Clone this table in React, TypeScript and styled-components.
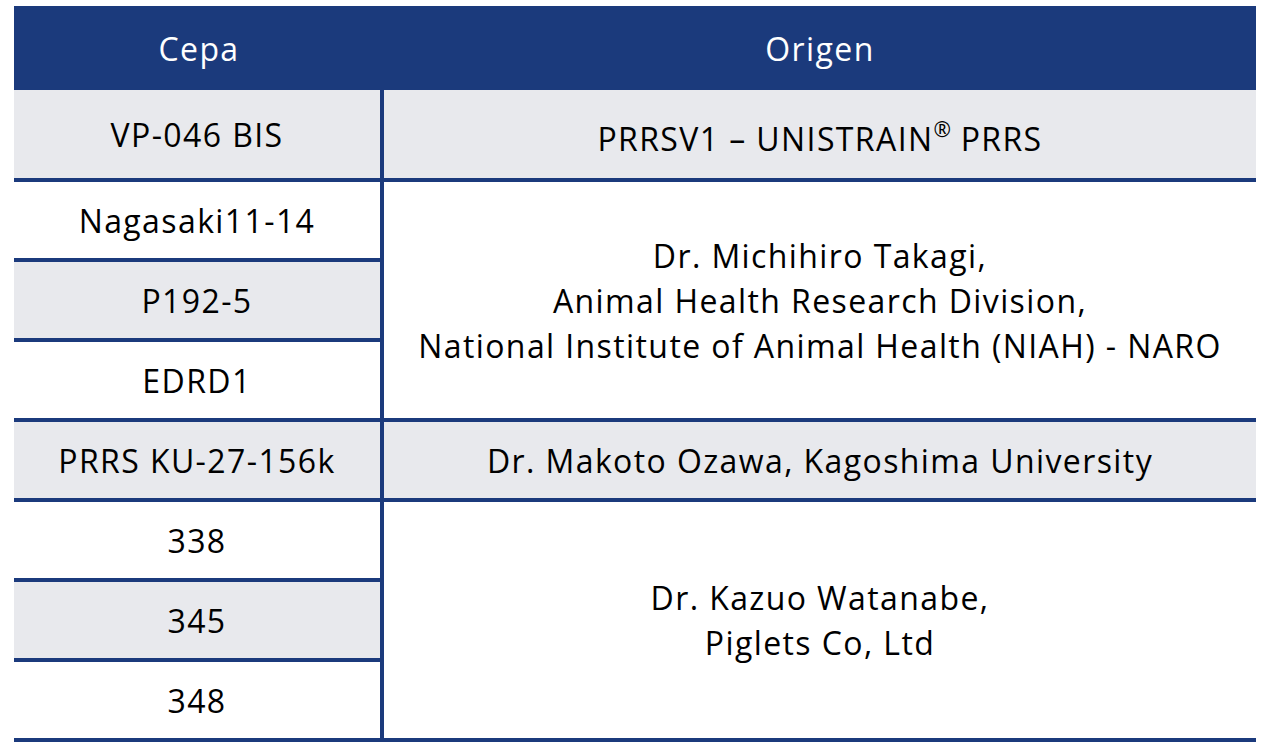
import type { ReactNode } from 'react';
import styled, { createGlobalStyle } from 'styled-components';

const NAVY = '#1b3a7c';
const GREY = '#e8e9ed';

const GlobalStyle = createGlobalStyle`
  body {
    margin: 0;
    background: #ffffff;
    font-family: "Open Sans", Inter, "Liberation Sans", sans-serif;
  }
`;

const Page = styled.div`
  padding: 6px 16px 0 14px;
`;

const Table = styled.table`
  width: 1242px;
  border-collapse: separate;
  border-spacing: 0;
  table-layout: fixed;
`;

const HeadCell = styled.th`
  height: 84px;
  padding: 0;
  background: ${NAVY};
  color: #ffffff;
  font-size: 32px;
  font-weight: 400;
  letter-spacing: 1.4px;
  text-align: center;
  vertical-align: middle;
`;

const BodyRow = styled.tr<{ $first?: boolean }>`
  height: ${(p) => (p.$first ? 92 : 80)}px;
`;

const Cell = styled.td<{ $shade: boolean }>`
  padding: 0;
  background: ${(p) => (p.$shade ? GREY : '#ffffff')};
  border-bottom: 4px solid ${NAVY};
  color: #000000;
  font-size: 32px;
  letter-spacing: 1.4px;
  line-height: 45px;
  text-align: center;
  vertical-align: middle;
`;

const StrainCell = styled(Cell)`
  border-right: 4px solid ${NAVY};
`;

// a superscript pushes the line down a little, as in the source document
const OriginCell = styled(Cell)<{ $lower?: boolean }>`
  padding-top: ${(p) => (p.$lower ? 8 : 0)}px;
`;

const Sup = styled.sup`
  font-size: 21px;
  letter-spacing: 0;
  line-height: 0;
  vertical-align: 0;
  position: relative;
  top: -14px;
`;

type Row = {
  strain: string;
  shade: boolean;
  origin?: ReactNode;
  span?: number;
  originShade?: boolean;
  lower?: boolean;
  first?: boolean;
};

const rows: Row[] = [
  {
    strain: 'VP-046 BIS',
    shade: true,
    first: true,
    origin: (
      <>
        PRRSV1 – UNISTRAIN<Sup>®</Sup> PRRS
      </>
    ),
    span: 1,
    originShade: true,
    lower: true,
  },
  {
    strain: 'Nagasaki11-14',
    shade: false,
    origin: (
      <>
        Dr. Michihiro Takagi,
        <br />
        Animal Health Research Division,
        <br />
        National Institute of Animal Health (NIAH) - NARO
      </>
    ),
    span: 3,
    originShade: false,
  },
  { strain: 'P192-5', shade: true },
  { strain: 'EDRD1', shade: false },
  {
    strain: 'PRRS KU-27-156k',
    shade: true,
    origin: 'Dr. Makoto Ozawa, Kagoshima University',
    span: 1,
    originShade: true,
  },
  {
    strain: '338',
    shade: false,
    origin: (
      <>
        Dr. Kazuo Watanabe,
        <br />
        Piglets Co, Ltd
      </>
    ),
    span: 3,
    originShade: false,
  },
  { strain: '345', shade: true },
  { strain: '348', shade: false },
];

export default function App() {
  return (
    <>
      <GlobalStyle />
      <Page>
        <Table>
          <colgroup>
            <col style={{ width: 370 }} />
            <col />
          </colgroup>
          <thead>
            <tr>
              <HeadCell>Cepa</HeadCell>
              <HeadCell>Origen</HeadCell>
            </tr>
          </thead>
          <tbody>
            {rows.map((row) => (
              <BodyRow key={row.strain} $first={row.first}>
                <StrainCell $shade={row.shade}>{row.strain}</StrainCell>
                {row.origin !== undefined && (
                  <OriginCell
                    rowSpan={row.span}
                    $shade={!!row.originShade}
                    $lower={row.lower}
                  >
                    {row.origin}
                  </OriginCell>
                )}
              </BodyRow>
            ))}
          </tbody>
        </Table>
      </Page>
    </>
  );
}
